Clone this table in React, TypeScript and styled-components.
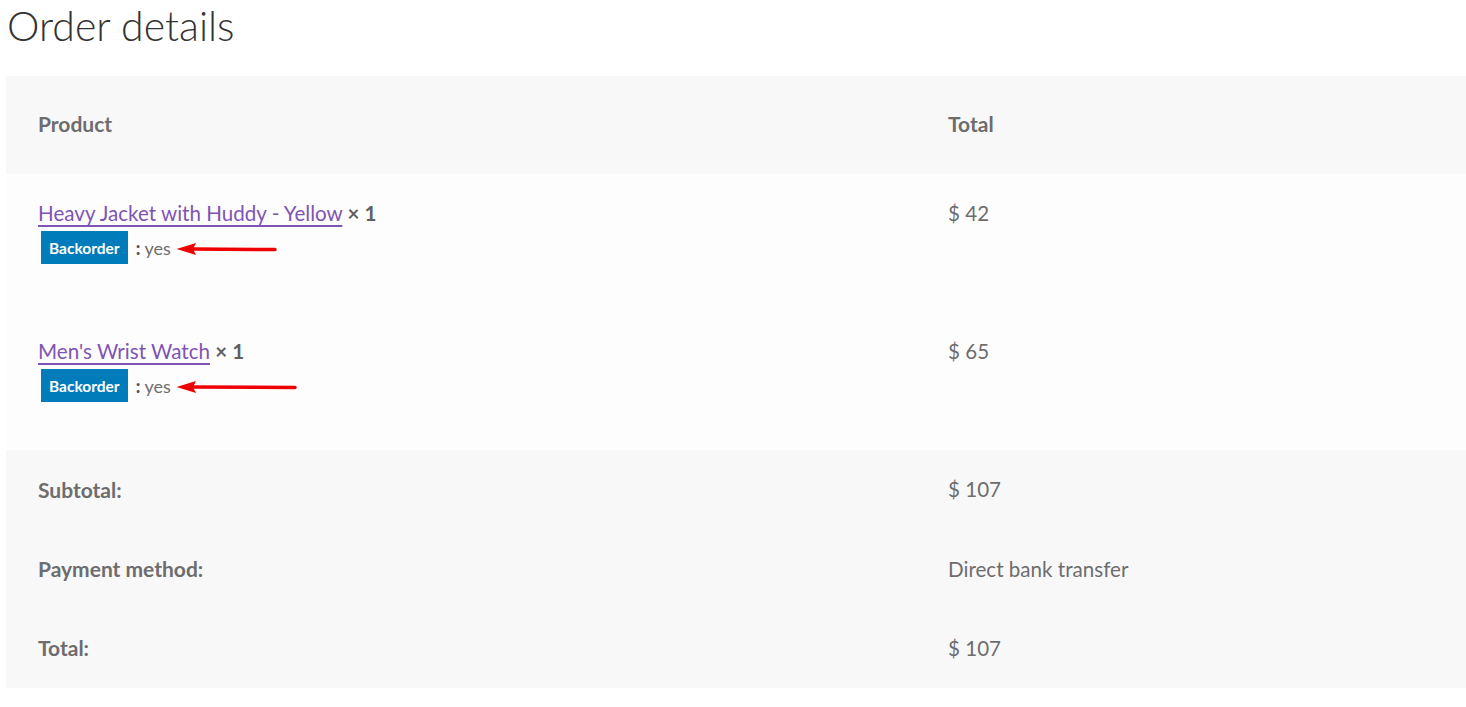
import React from "react";
import styled, { createGlobalStyle } from "styled-components";

const Global = createGlobalStyle`
  html, body { margin: 0; padding: 0; background: #ffffff; }
  body { font-family: "Lato", "Open Sans", sans-serif; color: #6d6d6d; }
`;

const Page = styled.div`
  padding: 0 0 0 6px;
`;

const Title = styled.h2`
  margin: 0;
  padding: 0 0 0 1px;
  font-size: 41px;
  font-weight: 300;
  line-height: 52px;
  color: #333333;
  height: 76px;
`;

const Table = styled.table`
  width: 100%;
  border-collapse: collapse;
  border-spacing: 0;
  font-size: 20.6px;
`;

const HeadCell = styled.th<{ $w?: string }>`
  background: #f8f8f8;
  height: 98px;
  box-sizing: border-box;
  padding: 0 32px 3px;
  text-align: left;
  vertical-align: middle;
  font-weight: 700;
  font-size: 21px;
  color: #6d6d6d;
  width: ${(p) => p.$w || "auto"};
`;

const BodyRow = styled.tr`
  background: #fdfdfd;
`;

const BodyCell = styled.td`
  height: 138px;
  box-sizing: border-box;
  padding: 24px 32px 0;
  vertical-align: top;
  line-height: 30px;
`;

const FootRow = styled.tr<{ $h: number }>`
  background: #f8f8f8;
  height: ${(p) => p.$h}px;
`;

const FootLabel = styled.th`
  padding: 0 32px 2px;
  text-align: left;
  font-weight: 700;
  font-size: 21px;
  vertical-align: middle;
`;

const FootValue = styled.td`
  padding: 0 32px 2px;
  vertical-align: middle;
`;

const ProductLink = styled.a`
  color: #7f54b3;
  text-decoration: underline;
  text-decoration-thickness: 2px;
  text-underline-offset: 4px;
`;

const Qty = styled.strong`
  font-weight: 700;
  color: #5f5f5f;
`;

const MetaLine = styled.div`
  display: flex;
  align-items: center;
  margin-top: 3px;
  margin-left: 3px;
  height: 33px;
`;

const Badge = styled.span`
  display: inline-flex;
  align-items: center;
  justify-content: center;
  background: #007cba;
  color: #ffffff;
  font-weight: 700;
  font-size: 15.5px;
  height: 33px;
  padding: 0 8px;
`;

const MetaValue = styled.span`
  font-size: 18px;
  margin-left: 8px;
  color: #6d6d6d;
`;

const Colon = styled.b`
  font-weight: 900;
  color: #555555;
`;

const Arrow = styled.svg`
  margin-left: 5px;
  margin-top: 3px;
`;

function RedArrow({ len }: { len: number }) {
  return (
    <Arrow width={len} height={14} viewBox={`0 0 ${len} 14`}>
      <path d={`M16 7 L${len - 2} 7.6`} stroke="#ee0000" strokeWidth={3.5} strokeLinecap="round" />
      <path d="M0.5 7 L20 1 L17 7 L20 13 Z" fill="#ee0000" />
    </Arrow>
  );
}

const items = [
  { name: "Heavy Jacket with Huddy - Yellow", total: "$ 42", arrow: 101 },
  { name: "Men's Wrist Watch", total: "$ 65", arrow: 121 },
];

export default function App() {
  return (
    <>
      <Global />
      <Page>
        <Title>Order details</Title>
        <Table>
          <thead>
            <tr>
              <HeadCell $w="910px">Product</HeadCell>
              <HeadCell>Total</HeadCell>
            </tr>
          </thead>
          <tbody>
            {items.map((it) => (
              <BodyRow key={it.name}>
                <BodyCell>
                  <ProductLink href="#">{it.name}</ProductLink> <Qty>× 1</Qty>
                  <MetaLine>
                    <Badge>Backorder</Badge>
                    <MetaValue>
                      <Colon>:</Colon> yes
                    </MetaValue>
                    <RedArrow len={it.arrow} />
                  </MetaLine>
                </BodyCell>
                <BodyCell>{it.total}</BodyCell>
              </BodyRow>
            ))}
          </tbody>
          <tfoot>
            <FootRow $h={80}>
              <FootLabel>Subtotal:</FootLabel>
              <FootValue>$ 107</FootValue>
            </FootRow>
            <FootRow $h={79}>
              <FootLabel>Payment method:</FootLabel>
              <FootValue>Direct bank transfer</FootValue>
            </FootRow>
            <FootRow $h={79}>
              <FootLabel>Total:</FootLabel>
              <FootValue>$ 107</FootValue>
            </FootRow>
          </tfoot>
        </Table>
      </Page>
    </>
  );
}
